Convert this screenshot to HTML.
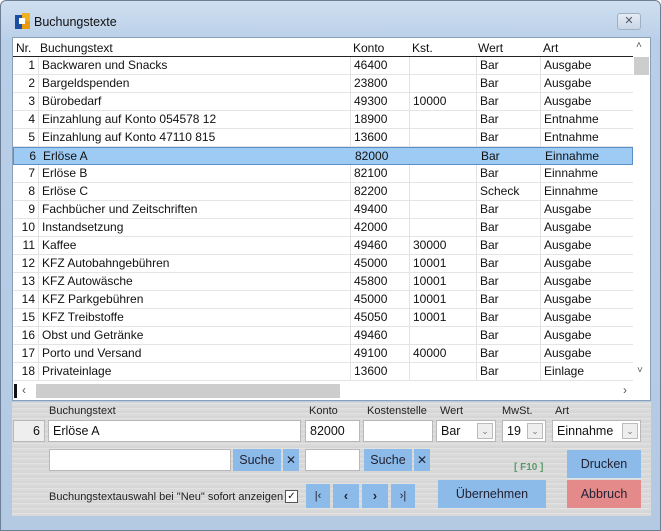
<!DOCTYPE html>
<html><head><meta charset="utf-8"><style>
*{box-sizing:border-box;margin:0;padding:0}
body{width:661px;height:531px;overflow:hidden;background:#fff;font-family:"Liberation Sans",sans-serif;font-size:12px;color:#111;position:relative}
.win{position:absolute;left:0;top:0;width:661px;height:531px;background:linear-gradient(#cfdff0,#b9cfe8 40px,#b4cae3);border:1px solid #6d7f96;border-radius:6px 6px 0 0}
.title{position:absolute;left:33px;top:14px;font-size:12.5px;color:#111}
.icon{position:absolute;left:14px;top:12px;width:16px;height:17px}
.close{position:absolute;left:616px;top:12px;width:24px;height:17px;border:1px solid #9fb0c4;border-radius:3px;background:linear-gradient(#e4ecf5,#c9d6e5);color:#556;font-size:11px;text-align:center;line-height:15px}
.grid{position:absolute;left:11px;top:36px;width:639px;height:364px;background:#fff;border:1px solid #8aa0b8}
.hdr{position:absolute;left:0;top:0;height:19px;width:620px;border-bottom:1px solid #222}
.c{position:absolute;white-space:nowrap;top:3px}
.row{position:absolute;left:0;width:620px;height:18px;border-bottom:1px solid #e4e4e4}
.row div{position:absolute;top:1px;white-space:nowrap}
.sel{background:#9ecbf4;border:1px solid #5a8fc7}
.vl{position:absolute;top:19px;height:324px;width:1px;background:#e2e2e2}
.vs{position:absolute;left:620px;top:0;width:17px;height:343px;background:#fff}
.hs{position:absolute;left:0;top:344px;width:637px;height:18px;background:#fff}
.panel{position:absolute;left:11px;top:401px;width:639px;height:114px;background:repeating-linear-gradient(0deg,#dadada 0 2px,#e2e2e2 2px 3px,#d6d6d6 3px 5px)}
.lbl{position:absolute;font-size:11px;color:#222}
.inp{position:absolute;background:#fff;border:1px solid #b8b8b8;height:22px;padding:3px 4px;font-size:12.5px}
.btn{position:absolute;background:#8cbbe9;text-align:center;font-size:12.5px;color:#223}
.dd{position:absolute;right:2px;top:2px;width:16px;height:16px;border:1px solid #bbb;background:#eee;font-size:9px;text-align:center;line-height:14px;color:#777}
</style></head><body>
<div class="win">
<svg class="icon" viewBox="0 0 16 17"><rect x="0" y="2" width="7" height="14" fill="#1d4fa0"/><rect x="7" y="0" width="8" height="8" fill="#f0b020"/><rect x="7" y="8" width="8" height="8" fill="#e89a10"/><rect x="4" y="5" width="6" height="6" fill="#fff"/></svg>
<div class="title">Buchungstexte</div>
<div class="close">✕</div>
<div class="grid">
<div class="hdr"><div class="c" style="left:3px">Nr.</div><div class="c" style="left:27px">Buchungstext</div><div class="c" style="left:340px">Konto</div><div class="c" style="left:399px">Kst.</div><div class="c" style="left:465px">Wert</div><div class="c" style="left:530px">Art</div></div>
<div class="vl" style="left:25px"></div><div class="vl" style="left:337px"></div><div class="vl" style="left:396px"></div><div class="vl" style="left:463px"></div><div class="vl" style="left:527px"></div>
<div id="rows"></div>
<div class="vs"><div style="position:absolute;left:3px;top:2px;font-size:10px;color:#555">˄</div><div style="position:absolute;left:1px;top:19px;width:15px;height:18px;background:#cdcdcd"></div><div style="position:absolute;left:4px;top:327px;font-size:10px;color:#555">˅</div></div>
<div class="hs"><div style="position:absolute;left:1px;top:2px;width:3px;height:14px;background:#111"></div><div style="position:absolute;left:9px;top:1px;font-size:12px;color:#555">‹</div><div style="position:absolute;left:23px;top:2px;width:304px;height:14px;background:#cdcdcd"></div><div style="position:absolute;left:610px;top:1px;font-size:12px;color:#555">›</div></div>
</div>
<div class="panel">
<div class="lbl" style="left:37px;top:3px">Buchungstext</div>
<div class="lbl" style="left:297px;top:3px">Konto</div>
<div class="lbl" style="left:355px;top:3px">Kostenstelle</div>
<div class="lbl" style="left:428px;top:3px">Wert</div>
<div class="lbl" style="left:490px;top:3px">MwSt.</div>
<div class="lbl" style="left:543px;top:3px">Art</div>
<div class="inp" style="left:1px;top:18px;width:32px;background:#eee;text-align:right">6</div>
<div class="inp" style="left:36px;top:18px;width:253px">Erlöse A</div>
<div class="inp" style="left:293px;top:18px;width:55px">82000</div>
<div class="inp" style="left:351px;top:18px;width:70px"></div>
<div class="inp" style="left:424px;top:18px;width:60px">Bar<div class="dd">⌄</div></div>
<div class="inp" style="left:490px;top:18px;width:44px">19<div class="dd">⌄</div></div>
<div class="inp" style="left:540px;top:18px;width:89px">Einnahme<div class="dd">⌄</div></div>
<div class="inp" style="left:37px;top:47px;width:182px"></div>
<div class="btn" style="left:221px;top:47px;width:48px;height:22px;line-height:22px">Suche</div>
<div class="btn" style="left:271px;top:47px;width:16px;height:22px;line-height:22px;font-size:12px">✕</div>
<div class="inp" style="left:293px;top:47px;width:55px"></div>
<div class="btn" style="left:352px;top:47px;width:48px;height:22px;line-height:22px">Suche</div>
<div class="btn" style="left:402px;top:47px;width:16px;height:22px;line-height:22px;font-size:12px">✕</div>
<div class="lbl" style="left:37px;top:89px;font-size:11px">Buchungstextauswahl bei "Neu" sofort anzeigen</div>
<div style="position:absolute;left:273px;top:88px;width:13px;height:13px;border:1px solid #555;background:#fff;font-size:10px;line-height:11px;text-align:center">✓</div>
<div class="btn" style="left:294px;top:82px;width:24px;height:24px;line-height:24px;font-size:11px">|‹</div>
<div class="btn" style="left:321px;top:82px;width:26px;height:24px;line-height:24px;font-weight:bold">‹</div>
<div class="btn" style="left:350px;top:82px;width:26px;height:24px;line-height:24px;font-weight:bold">›</div>
<div class="btn" style="left:379px;top:82px;width:24px;height:24px;line-height:24px;font-size:11px">›|</div>
<div style="position:absolute;left:502px;top:60px;font-size:10px;font-weight:bold;color:#5a9a6a">[ F10 ]</div>
<div class="btn" style="left:426px;top:78px;width:108px;height:28px;line-height:28px">Übernehmen</div>
<div class="btn" style="left:555px;top:48px;width:74px;height:28px;line-height:28px">Drucken</div>
<div class="btn" style="left:555px;top:78px;width:74px;height:28px;line-height:28px;background:#e58a8a">Abbruch</div>
</div>
</div>
<script>
var d=[["Backwaren und Snacks","46400","","Bar","Ausgabe"],["Bargeldspenden","23800","","Bar","Ausgabe"],["Bürobedarf","49300","10000","Bar","Ausgabe"],["Einzahlung auf Konto 054578 12","18900","","Bar","Entnahme"],["Einzahlung auf Konto 47110 815","13600","","Bar","Entnahme"],["Erlöse A","82000","","Bar","Einnahme"],["Erlöse B","82100","","Bar","Einnahme"],["Erlöse C","82200","","Scheck","Einnahme"],["Fachbücher und Zeitschriften","49400","","Bar","Ausgabe"],["Instandsetzung","42000","","Bar","Ausgabe"],["Kaffee","49460","30000","Bar","Ausgabe"],["KFZ Autobahngebühren","45000","10001","Bar","Ausgabe"],["KFZ Autowäsche","45800","10001","Bar","Ausgabe"],["KFZ Parkgebühren","45000","10001","Bar","Ausgabe"],["KFZ Treibstoffe","45050","10001","Bar","Ausgabe"],["Obst und Getränke","49460","","Bar","Ausgabe"],["Porto und Versand","49100","40000","Bar","Ausgabe"],["Privateinlage","13600","","Bar","Einlage"]];
var h="";d.forEach(function(r,i){var n=i+1;h+='<div class="row'+(n==6?' sel':'')+'" style="top:'+(19+i*18)+'px"><div style="width:22px;text-align:right;left:0">'+n+'</div><div style="left:29px">'+r[0]+'</div><div style="left:341px">'+r[1]+'</div><div style="left:400px">'+r[2]+'</div><div style="left:467px">'+r[3]+'</div><div style="left:531px">'+r[4]+'</div></div>'});
document.getElementById("rows").innerHTML=h;
</script>
</body></html>
